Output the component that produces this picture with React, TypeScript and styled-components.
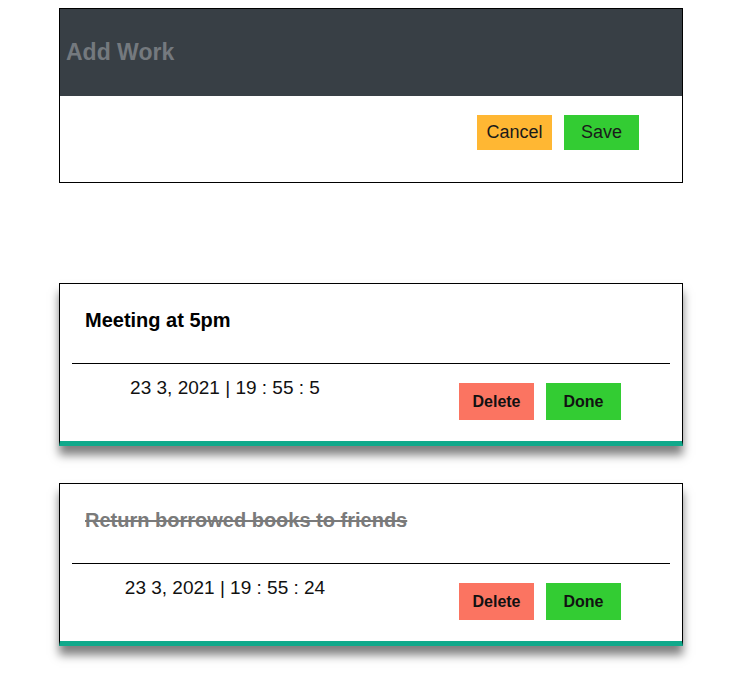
import React from 'react';
import styled, { createGlobalStyle } from 'styled-components';

const GlobalStyle = createGlobalStyle`
    body {
        margin: 8px;
        background: #ffffff;
        font-family: "Liberation Sans", Arial, sans-serif;
    }
`

const Page = styled.div`
    display: flex;
    flex-direction: column;
    padding: 0 0 30px 51px;
`

const Modal = styled.div`
    width: 624px;
    border: 1px solid #000;
    box-sizing: border-box;
`

const ModalHeader = styled.div`
    display: flex;
    align-items: center;
    height: 87px;
    padding-left: 6px;
    background-color: #383f45;
`

const ModalTitle = styled.h2`
    margin: 0;
    font-size: 23px;
    font-weight: bold;
    color: #74797e;
`

const ModalBody = styled.div`
    display: flex;
    justify-content: flex-end;
    gap: 12px;
    height: 86px;
    padding: 19px 43px 0 0;
    box-sizing: border-box;
`

const ModalButton = styled.button<{ $bg: string }>`
    width: 75px;
    height: 35px;
    padding: 0;
    border: none;
    background-color: ${p => p.$bg};
    color: #1a1a1a;
    font-family: inherit;
    font-size: 18px;
    cursor: pointer;
`

const TaskList = styled.ul`
    display: flex;
    flex-direction: column;
    gap: 37px;
    margin: 100px 0 0;
    padding: 0;
    list-style: none;
`

const TaskCard = styled.li`
    width: 624px;
    border: 1px solid #000;
    border-bottom: 5px solid #11a98b;
    box-sizing: border-box;
    box-shadow: rgba(0, 0, 0, 0.5) 0px 9px 9px;
`

const TaskTitle = styled.h3<{ $done: boolean }>`
    height: 79px;
    margin: 0;
    padding: 25px 0 0 25px;
    box-sizing: border-box;
    font-size: 20px;
    font-weight: bold;
    color: ${p => (p.$done ? '#7a7a7a' : '#000')};
    text-decoration: ${p => (p.$done ? 'line-through' : 'none')};
`

const Divider = styled.hr`
    width: 96%;
    margin: 0 auto;
    border: none;
    border-top: 1px solid #000;
`

const TaskFooter = styled.div`
    display: flex;
    align-items: flex-start;
    height: 77px;
`

const DateText = styled.p`
    width: 330px;
    margin: 0;
    padding-top: 13px;
    text-align: center;
    font-size: 19px;
    color: #111;
`

const TaskActions = styled.div`
    display: flex;
    gap: 12px;
    margin-left: auto;
    padding: 19px 61px 0 0;
`

const TaskButton = styled.button<{ $bg: string }>`
    width: 75px;
    height: 37px;
    padding: 0;
    border: none;
    background-color: ${p => p.$bg};
    color: #111;
    font-family: inherit;
    font-size: 16px;
    font-weight: bold;
    cursor: pointer;
`

const tasks = [
    { id: 1, title: 'Meeting at 5pm', date: '23 3, 2021 | 19 : 55 : 5', done: false },
    { id: 2, title: 'Return borrowed books to friends', date: '23 3, 2021 | 19 : 55 : 24', done: true },
];

export default function App() {
    return (
        <>
            <GlobalStyle />
            <Page>
                <Modal>
                    <ModalHeader>
                        <ModalTitle>Add Work</ModalTitle>
                    </ModalHeader>
                    <ModalBody>
                        <ModalButton $bg="#ffb733">Cancel</ModalButton>
                        <ModalButton $bg="#33cc33">Save</ModalButton>
                    </ModalBody>
                </Modal>
                <TaskList>
                    {tasks.map((task) => (
                        <TaskCard key={task.id}>
                            <TaskTitle $done={task.done}>{task.title}</TaskTitle>
                            <Divider />
                            <TaskFooter>
                                <DateText>{task.date}</DateText>
                                <TaskActions>
                                    <TaskButton $bg="#fb7461">Delete</TaskButton>
                                    <TaskButton $bg="#33cc33">Done</TaskButton>
                                </TaskActions>
                            </TaskFooter>
                        </TaskCard>
                    ))}
                </TaskList>
            </Page>
        </>
    );
}
